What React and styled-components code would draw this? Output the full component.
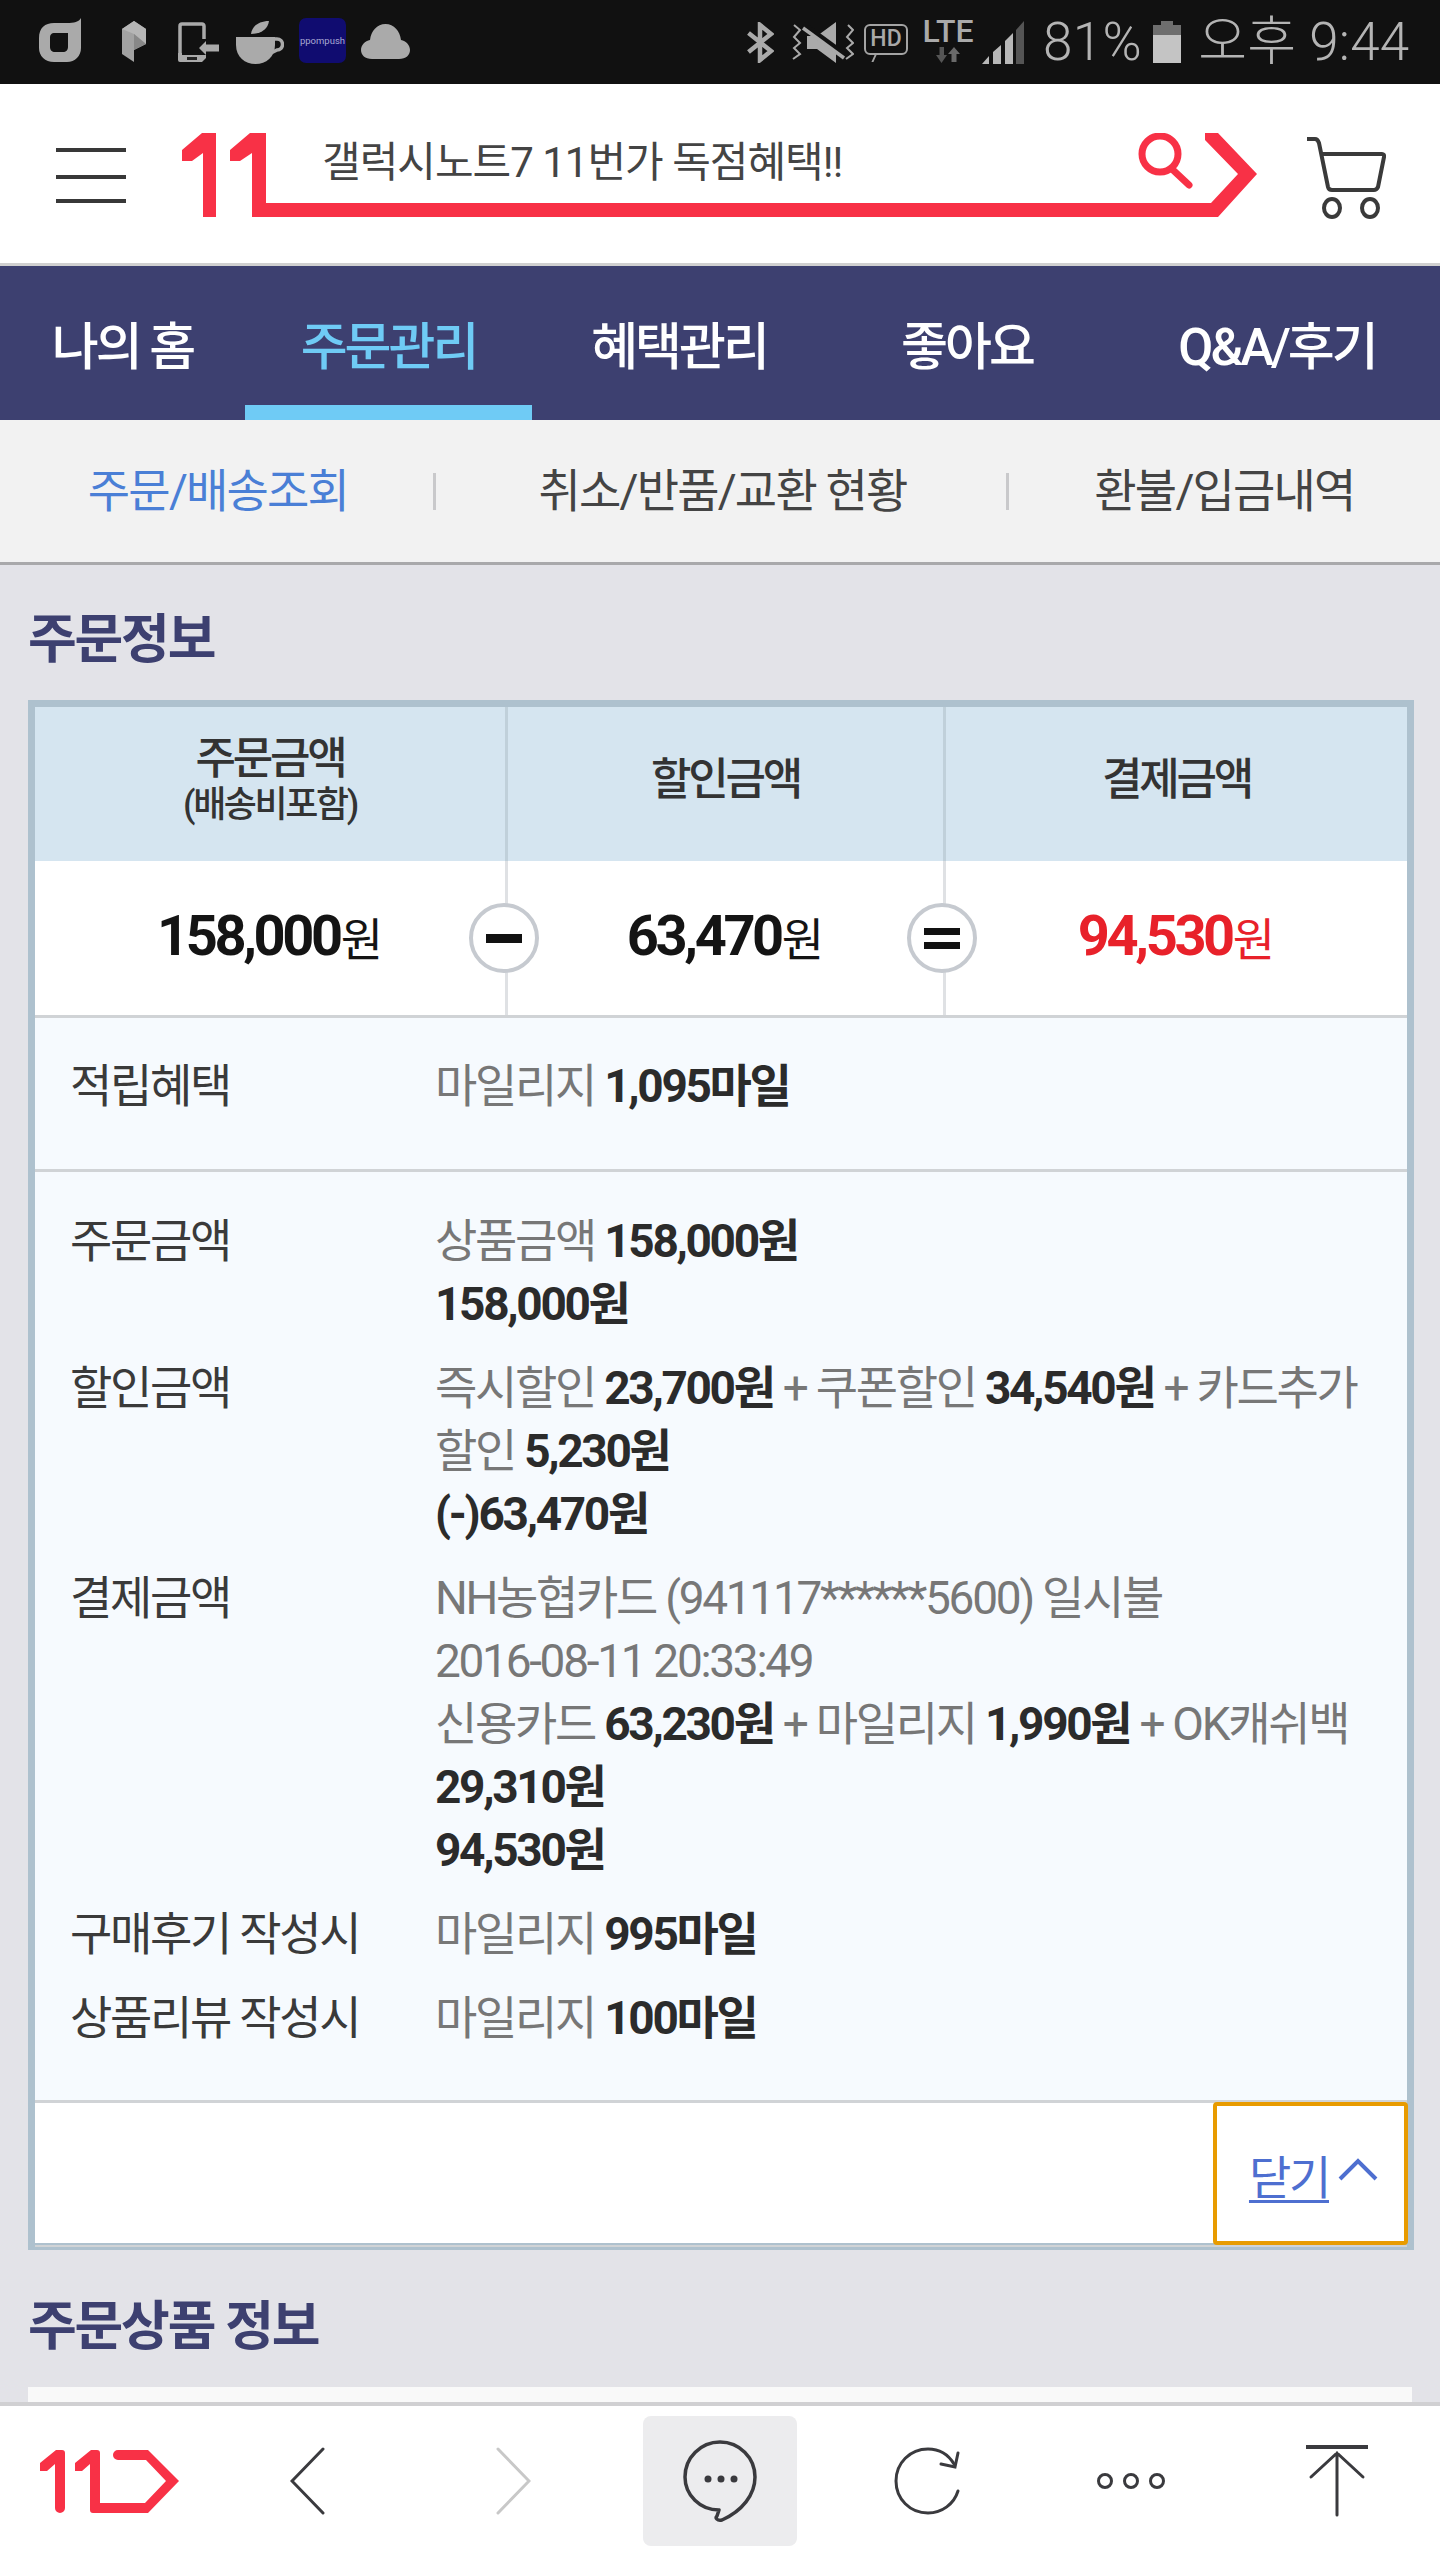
import React from 'react';
import styled, { createGlobalStyle } from 'styled-components';

const RED = '#f83146';
const NAVY = '#3d4070';
const INK = '#3a3a3e';
const ICON = '#aaaaaa';

const GlobalStyle = createGlobalStyle`
  html, body { margin: 0; padding: 0; background: #e3e3e8; }
  * { box-sizing: border-box; }
  body { font-family: Roboto, "Noto Sans CJK KR", sans-serif; }
`;

const Page = styled.div`
  width: 1440px;
  height: 2560px;
  display: flex;
  flex-direction: column;
  overflow: hidden;
`;

const StatusBar = styled.div`
  flex: 0 0 84px;
  background: #111;
  display: flex;
  align-items: center;
  color: #b4b4b4;
`;

const Glyph = styled.svg`
  flex: none;
  display: block;
  margin-left: ${(p) => p.$ml || 0}px;
  margin-top: ${(p) => p.$mt || 0}px;
`;

const StatusText = styled.span`
  flex: none;
  font-size: 53px;
  font-weight: 300;
  line-height: 84px;
  letter-spacing: ${(p) => p.$ls || 0}px;
  margin-left: ${(p) => p.$ml || 0}px;
`;

const PpomBox = styled.div`
  flex: none;
  width: 47px;
  height: 45px;
  margin-left: 15px;
  margin-top: -3px;
  border-radius: 7px;
  background: #100c70;
  color: #a9a9d2;
  font-size: 9.5px;
  line-height: 45px;
  text-align: center;
  white-space: nowrap;
  overflow: hidden;
`;

const HdBubble = styled.div`
  flex: none;
  margin-left: 10px;
  margin-top: -5px;
  position: relative;
  width: 44px;
  height: 31px;
  border: 2.5px solid #a4a4a4;
  border-radius: 6px;
  color: #a8a8a8;
  font-size: 23px;
  font-weight: 500;
  line-height: 26px;
  text-align: center;
  &::after {
    content: '';
    position: absolute;
    left: 7px;
    bottom: -9px;
    width: 7px;
    height: 7px;
    border-left: 2.5px solid #a4a4a4;
    transform: skewX(-24deg);
  }
`;

const LteStack = styled.div`
  flex: none;
  width: 50px;
  margin-left: 15px;
  margin-top: -1px;
  display: flex;
  flex-direction: column;
  align-items: center;
  gap: 4px;
  color: #aaa;
  font-size: 32px;
  line-height: 23px;
  font-weight: 500;
  letter-spacing: 0;
`;

const Header = styled.header`
  flex: 0 0 182px;
  background: #fff;
  border-bottom: 3px solid #d0d0d0;
  display: flex;
  align-items: flex-start;
  padding: 49px 0 0 56px;
`;

const SearchBox = styled.div`
  position: relative;
  width: 1078px;
  height: 84px;
  margin-left: 54px;
  padding-left: 142px;
  font-size: 42px;
  line-height: 60px;
  letter-spacing: -1px;
  color: #444;
`;

const LogoArt = styled.svg`
  position: absolute;
  left: 0;
  top: 0;
`;

const Nav = styled.nav`
  flex: 0 0 154px;
  background: ${NAVY};
  display: grid;
  grid-template-columns: 245px 287px 294px 282px 338px;
`;

const NavItem = styled.div`
  display: flex;
  align-items: center;
  justify-content: center;
  padding-top: ${(p) => (p.$active ? 15 : 0)}px;
  border-bottom: ${(p) => (p.$active ? '15px solid #6fcbf5' : 'none')};
  color: ${(p) => (p.$active ? '#6fcbf5' : '#fff')};
  font-size: 51px;
  font-weight: 500;
  letter-spacing: -3px;
`;

const SubNav = styled.div`
  flex: 0 0 145px;
  background: #f2f2f2;
  border-bottom: 3px solid #a9a9ab;
  display: grid;
  grid-template-columns: 436px 573px 431px;
  padding-bottom: 8px;
`;

const SubItem = styled.div`
  position: relative;
  display: flex;
  align-items: center;
  justify-content: center;
  font-size: 46px;
  letter-spacing: -1.8px;
  color: ${(p) => (p.$active ? '#4a7fd6' : '#444')};
  &::after {
    content: '';
    display: ${(p) => (p.$last ? 'none' : 'block')};
    position: absolute;
    right: 0;
    top: 53px;
    width: 3px;
    height: 37px;
    background: #c9c9cb;
  }
`;

const Main = styled.main`
  flex: 1;
  min-height: 0;
  background: #e3e3e8;
  padding: 0 28px;
  overflow: hidden;
`;

const SectionTitle = styled.h2`
  margin: 0;
  height: ${(p) => p.$h}px;
  padding-top: ${(p) => p.$pt}px;
  font-size: 53px;
  line-height: 72px;
  font-weight: 700;
  letter-spacing: -2.2px;
  color: ${NAVY};
`;

const Card = styled.section`
  width: 1386px;
  height: 1550px;
  border: 7px solid #aec1ce;
  background: #fff;
  display: flex;
  flex-direction: column;
`;

const SummaryHead = styled.div`
  flex: 0 0 154px;
  background: #d5e5f0;
  display: grid;
  grid-template-columns: 470px 438px 464px;
`;

const HeadCell = styled.div`
  display: flex;
  flex-direction: column;
  align-items: center;
  justify-content: center;
  border-left: ${(p) => (p.$first ? 'none' : '3px solid #c0d0da')};
  padding-bottom: 8px;
  color: #333;
  font-size: 44px;
  font-weight: 500;
  letter-spacing: -3.2px;
  line-height: 50px;
`;

const HeadSub = styled.span`
  font-size: 36px;
  line-height: 42px;
  font-weight: 500;
  letter-spacing: -2.4px;
`;

const SummaryBody = styled.div`
  flex: 0 0 157px;
  display: grid;
  grid-template-columns: 470px 438px 464px;
  border-bottom: 3px solid #d0d3d6;
`;

const ValueCell = styled.div`
  position: relative;
  display: flex;
  align-items: center;
  justify-content: center;
  border-left: ${(p) => (p.$first ? 'none' : '3px solid #dfe1e4')};
  padding-bottom: 4px;
  color: ${(p) => p.$color || '#141414'};
  font-size: 56px;
  font-weight: 700;
  letter-spacing: -3.4px;
`;

const Won = styled.span`
  font-size: 46px;
  font-weight: 400;
  letter-spacing: 0;
  margin-left: 1px;
`;

const OpCircle = styled.span`
  position: absolute;
  left: -39px;
  top: 42px;
  width: 70px;
  height: 70px;
  border-radius: 50%;
  background: #fff;
  border: 4px solid #c6cad0;
  display: flex;
  flex-direction: column;
  align-items: center;
  justify-content: center;
  gap: 7px;
`;

const OpBar = styled.i`
  display: block;
  width: 36px;
  height: ${(p) => p.$h}px;
  background: #111;
`;

const PointRow = styled.div`
  flex: 0 0 154px;
  background: #f6fafe;
  border-bottom: 3px solid #d0d3d6;
  padding-top: 37px;
`;

const Details = styled.div`
  flex: 0 0 931px;
  background: #f6fafe;
  border-bottom: 3px solid #d0d3d6;
  padding-top: 38px;
  display: flex;
  flex-direction: column;
  gap: 21px;
`;

const InfoRow = styled.div`
  display: grid;
  grid-template-columns: 365px 1fr;
  padding-left: 35px;
  font-size: 46px;
  line-height: 63px;
  letter-spacing: -2.3px;
`;

const Label = styled.div`
  color: #3a3a3a;
  font-weight: 400;
`;

const Value = styled.div`
  color: #777;
`;

const Strong = styled.b`
  color: #2b2b2b;
  font-weight: 700;
  letter-spacing: -2.3px;
`;

const Line = styled.div`
  white-space: nowrap;
`;

const CardFooter = styled.div`
  flex: 1;
  display: flex;
  justify-content: flex-end;
  border-bottom: 2px solid #d0d3d6;
`;

const CloseButton = styled.button`
  width: 195px;
  height: 143px;
  margin: -1px -1px 0 0;
  background: #fff;
  border: 4px solid #e89b00;
  border-radius: 4px;
  font-family: inherit;
  color: #4e6fd0;
  font-size: 46px;
  letter-spacing: -2.3px;
  display: flex;
  align-items: center;
  justify-content: center;
  gap: 9px;
  padding: 0 0 0 6px;
`;

const CloseLabel = styled.span`
  text-decoration: underline;
  text-underline-offset: 6px;
  text-decoration-thickness: 3px;
`;

const PeekCard = styled.div`
  width: 1384px;
  height: 20px;
  background: #f9f9f9;
`;

const BottomBar = styled.footer`
  flex: 0 0 158px;
  background: #fff;
  border-top: 4px solid #d0d0d2;
  display: grid;
  grid-template-columns: 39px 140px 111px 35px 171px 35px 112px 154px 97px 68px 135px 68px 141px 62px 72px;
  align-items: center;
  padding-bottom: 4px;
`;

const BarSlot = styled.div`
  grid-column: ${(p) => p.$col};
  display: flex;
  align-items: center;
  justify-content: center;
`;

const ChatHighlight = styled.div`
  grid-column: ${(p) => p.$col};
  height: 130px;
  border-radius: 8px;
  background: #ececee;
  display: flex;
  align-items: center;
  justify-content: center;
`;

function StatusIcons() {
  return (
    <StatusBar>
      <Glyph $ml={39} $mt={-4} width="43" height="44" viewBox="0 0 43 44">
        <path fillRule="evenodd" fill={ICON} d="M42 0V30C42 38 36 44 28 44H15C6 44 0 38 0 30V20C0 10 6 5 15 5H28C35 5 40 4 42 0ZM16 15C12 15 11 17 11 20V29C11 32 13 34 16 34H24C27 34 29 32 29 29V15Z" />
      </Glyph>
      <Glyph $ml={40} $mt={-1} width="24" height="41" viewBox="0 0 24 41">
        <path d="M12 0L24 8V23L12 29V41L0 33V8z" fill="#a2a2a2" />
        <path d="M0 8L12 0l12 8v15L12 13z" fill="#b6b6b6" />
        <path d="M12 13l12 10-12 6z" fill="#888" />
      </Glyph>
      <Glyph $ml={32} width="41" height="40" viewBox="0 0 41 40">
        <path d="M26 17V4a2 2 0 0 0-2-2H4a2 2 0 0 0-2 2v34" fill="none" stroke={ICON} strokeWidth="3.500" />
        <path d="M0 31h4v2h24v3l-4 4H2a2 2 0 0 1-2-2zM41 22.500H28V19l-7 7 7 7v-3.500h13z" fill={ICON} />
        <rect x="9" y="35" width="10" height="3" fill="#222" />
      </Glyph>
      <Glyph $ml={17} width="48" height="43" viewBox="0 0 48 43">
        <path d="M15 13C16 5 23 0 33 0 32 8 25 13 15 13Z" fill={ICON} />
        <path d="M0 16H39V24C39 36 30 43 19.500 43 9 43 0 36 0 24Z" fill={ICON} />
        <path d="M38 18H41A5.500 5.500 0 0 1 41 29L33 33" fill="none" stroke={ICON} strokeWidth="3.500" />
      </Glyph>
      <PpomBox>ppompush</PpomBox>
      <Glyph $ml={15} $mt={-1} width="49" height="35" viewBox="0 0 49 35">
        <path d="M11 35C4 35 0 31 0 26 0 21 4 17 9 16 10 7 16 0 24.500 0 33 0 39 7 40 16 45 17 49 21 49 26 49 31 45 35 38 35Z" fill={ICON} />
      </Glyph>

      <Glyph $ml={337} width="27" height="41" viewBox="0 0 27 41">
        <path d="M1.500 11L24 29 13 38V3L24 12 1.500 30" fill="none" stroke={ICON} strokeWidth="4.500" />
      </Glyph>
      <Glyph $ml={17} width="63" height="42" viewBox="0 0 63 42">
        <path d="M3 4L9 9 3 16 9 22 3 27 9 33 2 38M57 4L62 9 56 16 62 22 56 27 62 33 55 38" fill="none" stroke={ICON} strokeWidth="2" />
        <path d="M16 15H26L45 1V42L26 28H16Z" fill={ICON} />
        <path d="M12 4L53 34" stroke="#111" strokeWidth="7" />
        <path d="M12 7L53 37" stroke={ICON} strokeWidth="3.500" />
      </Glyph>
      <HdBubble>HD</HdBubble>
      <LteStack>
        LTE
        <svg width="24" height="16" viewBox="0 0 24 16">
          <path d="M3.500 0H8V8H11L5.500 16 0 8H3.500Z" fill="#555" />
          <path d="M18 0L24 7H20.500V15H15.500V7H12Z" fill="#6a6a6a" />
        </svg>
      </LteStack>
      <Glyph $ml={9} width="43" height="43" viewBox="0 0 43 43">
        <path d="M0 43L7 35V43ZM11 43V31L19 24V43ZM23 43V20L31 12V43Z" fill="#b8b8b8" />
        <path d="M34 43V9L42 0V43Z" fill="#555" />
      </Glyph>
      <StatusText $ml={18} $ls={0.4}>81%</StatusText>
      <Glyph $ml={11} width="28" height="42" viewBox="0 0 28 42">
        <path d="M8 0h12v4h8v10H0V4h8z" fill="#6e6e6e" />
        <rect y="14" width="28" height="28" fill="#c4c4c4" />
      </Glyph>
      <StatusText $ml={17} $ls={0.2}>오후 9:44</StatusText>
    </StatusBar>
  );
}

export default function App() {
  return (
    <Page>
      <GlobalStyle />
      <StatusIcons />

      <Header>
        <Glyph width="70" height="72" viewBox="0 0 70 72">
          <rect y="15" width="70" height="4" fill="#383838" />
          <rect y="42" width="70" height="4" fill="#383838" />
          <rect y="66" width="70" height="4" fill="#383838" />
        </Glyph>
        <SearchBox>
          <LogoArt width="1078" height="84" viewBox="0 0 1078 84">
            <path d="M22 0H36V84H23V20L12 28H2V17Z" fill={RED} />
            <path d="M70 0H86V70H1031L1058 41 1025 7V0H1038L1077 41 1038 84H72V20L60 28H50V17Z" fill={RED} />
            <circle cx="980" cy="21" r="18" fill="none" stroke={RED} strokeWidth="7" />
            <path d="M993 37L1009 52" stroke={RED} strokeWidth="7" strokeLinecap="round" />
          </LogoArt>
          갤럭시노트7 11번가 독점혜택!!
        </SearchBox>
        <Glyph $ml={48} $mt={4} width="80" height="82" viewBox="0 0 80 82">
          <path d="M1 2h8c2 0 3 1 4 4l9 44c.5 2 2 3 4 3h42c2 0 3-1 4-3l6-30c.5-2-.5-3-2-3H17" fill="none" stroke="#3a3a3a" strokeWidth="4" strokeLinejoin="round" />
          <ellipse cx="26" cy="71" rx="8" ry="9" fill="none" stroke="#3a3a3a" strokeWidth="4" />
          <ellipse cx="64" cy="71" rx="8" ry="9" fill="none" stroke="#3a3a3a" strokeWidth="4" />
        </Glyph>
      </Header>

      <Nav>
        <NavItem>나의 홈</NavItem>
        <NavItem $active>주문관리</NavItem>
        <NavItem>혜택관리</NavItem>
        <NavItem>좋아요</NavItem>
        <NavItem>Q&amp;A/후기</NavItem>
      </Nav>

      <SubNav>
        <SubItem $active>주문/배송조회</SubItem>
        <SubItem>취소/반품/교환 현황</SubItem>
        <SubItem $last>환불/입금내역</SubItem>
      </SubNav>

      <Main>
        <SectionTitle $h={135} $pt={39}>주문정보</SectionTitle>
        <Card>
          <SummaryHead>
            <HeadCell $first>
              주문금액
              <HeadSub>(배송비포함)</HeadSub>
            </HeadCell>
            <HeadCell>할인금액</HeadCell>
            <HeadCell>결제금액</HeadCell>
          </SummaryHead>
          <SummaryBody>
            <ValueCell $first>
              158,000<Won>원</Won>
            </ValueCell>
            <ValueCell>
              <OpCircle>
                <OpBar $h={9} />
              </OpCircle>
              63,470<Won>원</Won>
            </ValueCell>
            <ValueCell $color="#e8212a">
              <OpCircle>
                <OpBar $h={7} />
                <OpBar $h={7} />
              </OpCircle>
              94,530<Won>원</Won>
            </ValueCell>
          </SummaryBody>
          <PointRow>
            <InfoRow>
              <Label>적립혜택</Label>
              <Value>마일리지 <Strong>1,095마일</Strong></Value>
            </InfoRow>
          </PointRow>
          <Details>
            <InfoRow>
              <Label>주문금액</Label>
              <Value>
                <Line>상품금액 <Strong>158,000원</Strong></Line>
                <Line><Strong>158,000원</Strong></Line>
              </Value>
            </InfoRow>
            <InfoRow>
              <Label>할인금액</Label>
              <Value>
                <Line>즉시할인 <Strong>23,700원</Strong> + 쿠폰할인 <Strong>34,540원</Strong> + 카드추가</Line>
                <Line>할인 <Strong>5,230원</Strong></Line>
                <Line><Strong>(-)63,470원</Strong></Line>
              </Value>
            </InfoRow>
            <InfoRow>
              <Label>결제금액</Label>
              <Value>
                <Line>NH농협카드 (941117******5600) 일시불</Line>
                <Line>2016-08-11 20:33:49</Line>
                <Line>신용카드 <Strong>63,230원</Strong> + 마일리지 <Strong>1,990원</Strong> + OK캐쉬백</Line>
                <Line><Strong>29,310원</Strong></Line>
                <Line><Strong>94,530원</Strong></Line>
              </Value>
            </InfoRow>
            <InfoRow>
              <Label>구매후기 작성시</Label>
              <Value>마일리지 <Strong>995마일</Strong></Value>
            </InfoRow>
            <InfoRow>
              <Label>상품리뷰 작성시</Label>
              <Value>마일리지 <Strong>100마일</Strong></Value>
            </InfoRow>
          </Details>
          <CardFooter>
            <CloseButton>
              <CloseLabel>닫기</CloseLabel>
              <Glyph $mt={-8} width="40" height="24" viewBox="0 0 40 24">
                <path d="M2 21L20 3l18 18" fill="none" stroke="#4e6fd0" strokeWidth="4" />
              </Glyph>
            </CloseButton>
          </CardFooter>
        </Card>
        <SectionTitle $h={137} $pt={41}>주문상품 정보</SectionTitle>
        <PeekCard />
      </Main>

      <BottomBar>
        <BarSlot $col={2}>
          <svg width="140" height="63" viewBox="0 0 140 63">
            <path fill={RED} d="M17 0H23A3 3 0 0 1 26 3V58A5 5 0 0 1 16 58V14L8 21H1V13Z" />
            <path fill={RED} d="M52 0H58A3 3 0 0 1 61 3V53H106L127 31 107 10H79A5 5 0 0 1 79 0H109L140 31 109 63H54A3 3 0 0 1 51 60V14L43 21H36V13Z" />
          </svg>
        </BarSlot>
        <BarSlot $col={4}>
          <svg width="35" height="68" viewBox="0 0 35 68">
            <path d="M33 2L2 34l31 32" fill="none" stroke="#3a3a3e" strokeWidth="3" strokeLinecap="round" />
          </svg>
        </BarSlot>
        <BarSlot $col={6}>
          <svg width="35" height="68" viewBox="0 0 35 68">
            <path d="M2 2l31 32L2 66" fill="none" stroke="#c8c8c8" strokeWidth="3" strokeLinecap="round" />
          </svg>
        </BarSlot>
        <ChatHighlight $col={8}>
          <svg width="76" height="82" viewBox="0 0 76 82">
            <path d="M37 70C18 70 3 55 3 37A35 35 0 0 1 73 37C73 55 60 71 40 80 35 81 33 78 35 76L37 70Z" fill="none" stroke={INK} strokeWidth="3.500" strokeLinejoin="round" />
            <circle cx="26" cy="39" r="3.500" fill={INK} />
            <circle cx="39" cy="39" r="3.500" fill={INK} />
            <circle cx="52" cy="39" r="3.500" fill={INK} />
          </svg>
        </ChatHighlight>
        <BarSlot $col={10}>
          <svg width="68" height="68" viewBox="0 0 68 68">
            <path d="M60 17C54 7 45 2 34 2 16 2 2 16 2 34s14 32 32 32c14 0 26-9 30-22" fill="none" stroke={INK} strokeWidth="3" strokeLinecap="round" />
            <path d="M64 6l-3 14-14-3" fill="none" stroke={INK} strokeWidth="3" strokeLinecap="round" />
          </svg>
        </BarSlot>
        <BarSlot $col={12}>
          <svg width="68" height="18" viewBox="0 0 68 18">
            <circle cx="8" cy="9" r="6.500" fill="none" stroke={INK} strokeWidth="3" />
            <circle cx="34" cy="9" r="6.500" fill="none" stroke={INK} strokeWidth="3" />
            <circle cx="60" cy="9" r="6.500" fill="none" stroke={INK} strokeWidth="3" />
          </svg>
        </BarSlot>
        <BarSlot $col={14}>
          <svg width="62" height="72" viewBox="0 0 62 72">
            <path d="M0 2h62" stroke={INK} strokeWidth="4" />
            <path d="M31 8v62M5 32L31 8l26 24" fill="none" stroke={INK} strokeWidth="3" strokeLinecap="round" />
          </svg>
        </BarSlot>
      </BottomBar>
    </Page>
  );
}
